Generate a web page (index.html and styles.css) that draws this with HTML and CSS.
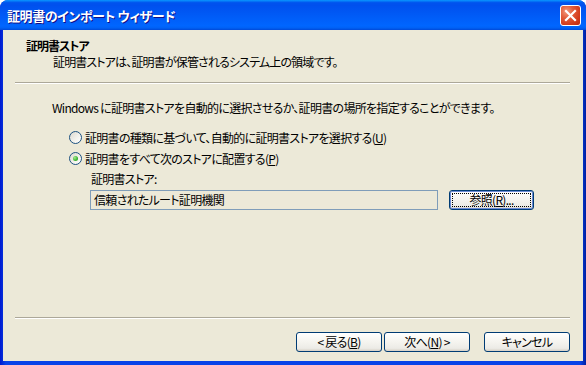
FILE: index.html
```html
<!DOCTYPE html>
<html>
  <head>
    <meta charset="utf-8">
    <title>証明書のインポート ウィザード</title>
    <link rel="stylesheet" href="styles.css">
  </head>
  <body>
    <div class="window">
      <div class="titlebar">
        <span class="title">証明書のインポート ウィザード</span>
        <div class="close-btn">
          <svg width="13" height="13" viewBox="0 0 13 13">
            <path d="M2 2 L11 11 M11 2 L2 11" stroke="#fff" stroke-width="2.2" stroke-linecap="square" />
          </svg>
        </div>
      </div>

      <div class="client">
        <div class="header">
          <h1>証明書ストア</h1>
          <p>証明書ストアは、証明書が保管されるシステム上の領域です。</p>
        </div>
        <div class="separator"></div>

        <div class="content">
          <p class="intro">Windows に証明書ストアを自動的に選択させるか、証明書の場所を指定することができます。</p>

          <div class="radio-row">
            <span class="radio"></span>
            <span>証明書の種類に基づいて、自動的に証明書ストアを選択する(<u>U</u>)</span>
          </div>
          <div class="radio-row second">
            <span class="radio checked"></span>
            <span>証明書をすべて次のストアに配置する(<u>P</u>)</span>
          </div>

          <div class="store-group">
            <label>証明書ストア:</label>
            <div class="store-row">
              <div class="textbox">信頼されたルート証明機関</div>
              <button class="btn browse"><span class="focus">参照(<u>R</u>)...</span></button>
            </div>
          </div>
        </div>

        <div class="separator bottom"></div>
        <div class="actions">
          <button class="btn">&lt; 戻る(<u>B</u>)</button>
          <button class="btn">次へ(<u>N</u>) &gt;</button>
          <button class="btn cancel">キャンセル</button>
        </div>
      </div>
    </div>
  </body>
</html>
```

FILE: styles.css
```css
* {
  box-sizing: border-box;
  margin: 0;
  padding: 0;
}

body {
  width: 586px;
  height: 365px;
  background: #ffffff;
  font-family: 'Noto Sans CJK JP', 'Noto Sans', sans-serif;
  font-size: 12px;
  font-feature-settings: 'palt';
  letter-spacing: -0.7px;
  color: #000;
}

.window {
  display: flex;
  flex-direction: column;
  width: 586px;
  height: 365px;
  border-radius: 8px 8px 0 0;
  overflow: hidden;
  background: linear-gradient(90deg, #0019cf 0%, #0842e8 1%, #0842e8 99%, #001ea0 100%);
}

.titlebar {
  display: flex;
  align-items: center;
  justify-content: space-between;
  height: 30px;
  padding: 0 5px 0 7px;
  background: linear-gradient(180deg, #0997ff 0%, #0053ee 9%, #0050ee 18%, #0066ff 86%, #0061f5 93%, #0049d8 100%);
}

.title {
  color: #fff;
  font-weight: bold;
  font-size: 13px;
  letter-spacing: -0.4px;
  text-shadow: 1px 1px #0f1089;
  padding-top: 1px;
}

.close-btn {
  display: flex;
  align-items: center;
  justify-content: center;
  width: 21px;
  height: 21px;
  border: 1px solid #fff;
  border-radius: 3px;
  background: radial-gradient(circle at 30% 30%, #f39a7e 0%, #e25d3b 35%, #d33b1b 70%, #c02a10 100%);
}

.client {
  display: flex;
  flex-direction: column;
  flex: 1;
  margin: 0 3px 4px 3px;
  background: #ece9d8;
}

.header {
  padding: 8px 0 0 23px;
  height: 52px;
}

.header h1 {
  font-size: 12px;
  font-weight: bold;
  letter-spacing: -1px;
  line-height: 16px;
}

.header p {
  line-height: 16px;
  padding-left: 27px;
  letter-spacing: -0.85px;
}

.separator {
  height: 2px;
  margin: 0 13px 0 12px;
  border-top: 1px solid #aca899;
  border-bottom: 1px solid #fff;
}

.content {
  padding: 16px 0 0 49px;
}

.intro {
  line-height: 16px;
}

.radio-row {
  display: flex;
  align-items: center;
  gap: 3px;
  height: 16px;
  margin: 13px 0 0 17px;
}

.radio-row.second {
  margin-top: 5px;
}

.radio {
  display: flex;
  align-items: center;
  justify-content: center;
  width: 13px;
  height: 13px;
  border: 1px solid #1c5180;
  border-radius: 50%;
  background: linear-gradient(135deg, #dcd9cf 0%, #f4f3ee 60%, #ffffff 100%);
}

.radio.checked::after {
  content: '';
  width: 5px;
  height: 5px;
  border-radius: 50%;
  background: radial-gradient(circle at 35% 35%, #a6eb8f 0%, #3db333 60%, #21a11a 100%);
}

.store-group {
  margin: 5px 0 0 38px;
}

.store-group label {
  display: block;
  line-height: 16px;
  padding-left: 1px;
}

.store-row {
  display: flex;
  align-items: center;
  margin-top: 3px;
}

.textbox {
  width: 348px;
  height: 20px;
  border: 1px solid #7f9db9;
  padding: 0 3px;
  line-height: 18px;
}

.btn {
  font-family: inherit;
  font-size: 12px;
  font-feature-settings: 'palt';
  letter-spacing: -0.7px;
  width: 86px;
  height: 20px;
  border: 1px solid #003c74;
  border-radius: 3px;
  color: #000;
  background: linear-gradient(180deg, #ffffff 0%, #f6f5f0 45%, #ecebe6 85%, #d6d0c5 100%);
}

.btn.browse {
  width: 85px;
  height: 20px;
  margin-left: 11px;
  padding: 2px;
  box-shadow: inset 0 0 0 1px #6b8bd6;
}

.focus {
  display: block;
  height: 100%;
  line-height: 13px;
  outline: 1px dotted #000;
  outline-offset: -1px;
}

.bottom {
  margin-top: auto;
}

.actions {
  display: flex;
  justify-content: flex-end;
  gap: 2px;
  height: 42px;
  padding: 13px 13px 0 0;
}

.actions .btn {
  line-height: 16px;
}

.actions .cancel {
  margin-left: 12px;
}
```
